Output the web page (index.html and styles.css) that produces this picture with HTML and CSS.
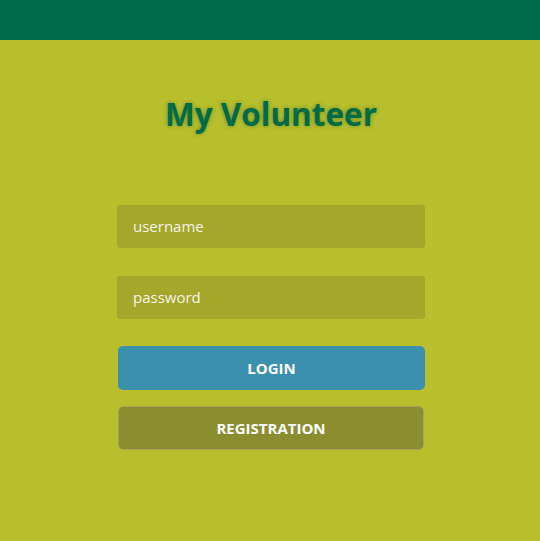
FILE: index.html
```html
<!DOCTYPE html>
<html>
<head>
<meta charset="utf-8">
<link rel="stylesheet" href="styles.css">
</head>
<body>
<header class="topbar"></header>
<main class="content">
  <h1 class="title">My Volunteer</h1>
  <form class="form">
    <div class="field">username</div>
    <div class="field">password</div>
    <button type="button" class="btn btn-login">LOGIN</button>
    <button type="button" class="btn btn-reg">REGISTRATION</button>
  </form>
</main>
</body>
</html>
```

FILE: styles.css
```css
html, body {
  margin: 0;
  padding: 0;
  height: 100%;
}
body {
  background: #b8bf2c;
  font-family: "Open Sans", "Noto Sans", sans-serif;
}
.topbar {
  height: 40px;
  background: #006b48;
}
.content {
  display: flex;
  flex-direction: column;
  align-items: center;
  padding-left: 2px;
}
.title {
  margin: 52px 0 0 0;
  height: 44px;
  line-height: 44px;
  font-size: 31.5px;
  font-weight: 700;
  color: #006b47;
  text-shadow: 0 0 4px rgba(0, 70, 40, 0.45);
}
.form {
  margin-top: 69px;
  width: 308px;
  display: flex;
  flex-direction: column;
}
.field {
  height: 43px;
  line-height: 43px;
  box-sizing: border-box;
  padding-left: 16px;
  background: #a4a82a;
  border-radius: 4px;
  color: #f4f4e8;
  font-size: 15px;
  margin-bottom: 28px;
  box-shadow: inset 0 0 1px rgba(0,0,0,0.15);
}
.field + .field {
  margin-bottom: 27px;
}
.btn {
  display: block;
  height: 44px;
  border-radius: 5px;
  color: #ffffff;
  font-family: "Open Sans", "Noto Sans", sans-serif;
  font-weight: 700;
  font-size: 15px;
  cursor: pointer;
  padding: 0;
}
.btn-login {
  margin-left: 1px;
  width: 307px;
  background: #3a90ad;
  border: none;
}
.btn-reg {
  margin-top: 16px;
  margin-left: 1px;
  width: 306px;
  background: #8a8e2e;
  border: 1px solid #a3a655;
}
```
